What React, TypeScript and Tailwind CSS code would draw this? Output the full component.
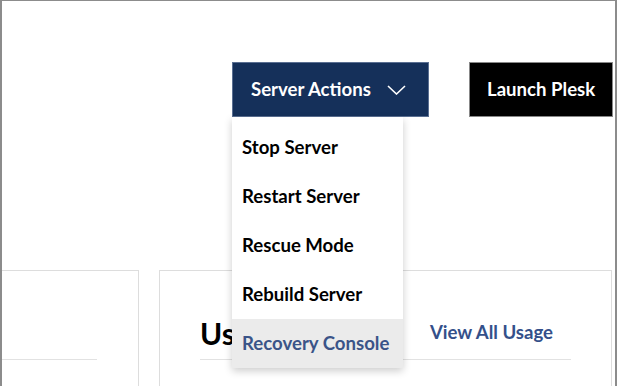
import { useState } from "react";

const menuItems = [
  "Stop Server",
  "Restart Server",
  "Rescue Mode",
  "Rebuild Server",
  "Recovery Console",
];

function Chevron() {
  return (
    <svg width="19" height="10" viewBox="0 0 19 10" fill="none">
      <path d="M1 1l8.5 8 8.5-8" stroke="white" strokeWidth="1.6" />
    </svg>
  );
}

export default function App() {
  const [active] = useState("Recovery Console");

  return (
    <div
      className="w-[617px] h-[386px] overflow-hidden bg-white border-t border-x-2 border-[#8c8c8c] text-black"
      style={{ fontFamily: "Lato, 'Liberation Sans', sans-serif" }}
    >
      <div className="flex justify-end items-start pt-[61px] pr-[2px] gap-[40px]">
        <div className="relative">
          <button className="flex items-center h-[55px] w-[197px] pl-[18px] bg-[#15305a] text-white text-[18.6px] font-bold border border-[#5a6f92]">
            Server Actions
            <span className="ml-[16px] mt-[1px]">
              <Chevron />
            </span>
          </button>
          <ul className="absolute z-10 top-full left-0 w-[171px] bg-white pt-[6px] shadow-[0_3px_8px_rgba(0,0,0,0.2)]">
            {menuItems.map((item) => (
              <li
                key={item}
                className={
                  item === active
                    ? "h-[49px] flex items-center pl-[10px] text-[18.6px] font-bold bg-[#ebebeb] text-[#3a5488]"
                    : "h-[49px] flex items-center pl-[10px] text-[18.6px] font-bold text-black"
                }
              >
                {item}
              </li>
            ))}
          </ul>
        </div>
        <button className="h-[55px] w-[144px] pl-[17px] text-left bg-black text-white text-[18.6px] font-bold border border-[#888]">
          Launch Plesk
        </button>
      </div>

      <div className="flex gap-[20px] mt-[153px]">
        <div className="w-[137px] h-[140px] border-t border-r border-[#dddddd] pt-[88px] pr-[41px]">
          <div className="border-b border-[#e2e2e2]" />
        </div>
        <div className="w-[453px] h-[140px] border border-[#dddddd] px-10 pt-[42px]">
          <div className="flex items-center justify-between h-[40px] border-b border-[#e2e2e2] pb-[6px] box-content">
            <h2 className="text-[30px] font-bold leading-none">Usage</h2>
            <a className="mr-[18px] text-[18.6px] font-bold text-[#34508a]">View All Usage</a>
          </div>
        </div>
      </div>
    </div>
  );
}
